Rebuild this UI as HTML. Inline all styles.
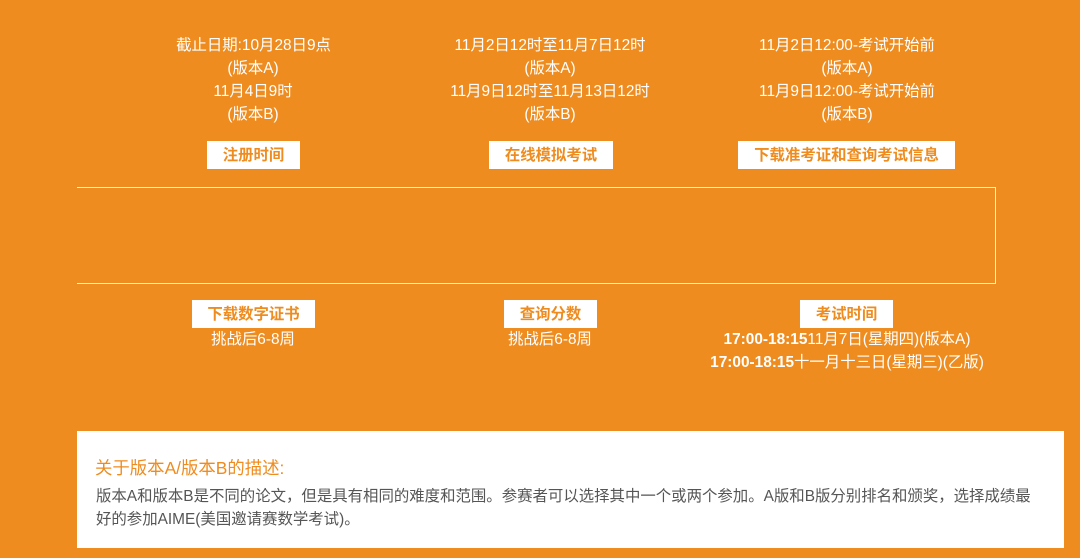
<!DOCTYPE html>
<html lang="zh-CN">
<head>
<meta charset="utf-8">
<title>AIME</title>
<style>
html,body{margin:0;padding:0}
body{width:1080px;height:558px;position:relative;overflow:hidden;background:#ee8c1f;font-family:"Liberation Sans","Noto Sans CJK SC",sans-serif;color:#fff}
.t{position:absolute;white-space:nowrap;transform:translateX(-50%);font-size:15.4px;line-height:23px;height:23px;color:#fff;text-align:center}
.b{position:absolute;background:#fff;color:#ee8c1f;font-size:15.4px;font-weight:700;text-align:center;white-space:nowrap;height:28px;line-height:30px}
.frame{position:absolute;left:77px;top:187px;width:918px;height:95px;border:1px solid #ffeeda;border-left:0;box-sizing:content-box}
.card{position:absolute;left:77px;top:431px;width:987px;height:117px;background:#fff}
.h{position:absolute;left:18px;top:25px;font-size:17.4px;line-height:24px;color:#ee8c1f;white-space:nowrap}
.p{position:absolute;left:19px;white-space:nowrap;font-size:15.42px;line-height:23px;color:#555}
</style>
</head>
<body>
<div class="t" style="left:253.5px;top:34px">截止日期:10月28日9点</div>
<div class="t" style="left:253px;top:57px">(版本A)</div>
<div class="t" style="left:253px;top:80px">11月4日9时</div>
<div class="t" style="left:253px;top:103px">(版本B)</div>

<div class="t" style="left:550px;top:34px">11月2日12时至11月7日12时</div>
<div class="t" style="left:550px;top:57px">(版本A)</div>
<div class="t" style="left:550px;top:80px">11月9日12时至11月13日12时</div>
<div class="t" style="left:550px;top:103px">(版本B)</div>

<div class="t" style="left:847px;top:34px">11月2日12:00-考试开始前</div>
<div class="t" style="left:847px;top:57px">(版本A)</div>
<div class="t" style="left:847px;top:80px">11月9日12:00-考试开始前</div>
<div class="t" style="left:847px;top:103px">(版本B)</div>

<div class="b" style="left:207px;top:141px;width:93px">注册时间</div>
<div class="b" style="left:489px;top:141px;width:124px">在线模拟考试</div>
<div class="b" style="left:738px;top:141px;width:217px">下载准考证和查询考试信息</div>

<div class="frame"></div>

<div class="b" style="left:192px;top:300px;width:123px">下载数字证书</div>
<div class="b" style="left:504px;top:300px;width:93px">查询分数</div>
<div class="b" style="left:800px;top:300px;width:93px">考试时间</div>

<div class="t" style="left:253px;top:328px">挑战后6-8周</div>
<div class="t" style="left:550px;top:328px">挑战后6-8周</div>
<div class="t" style="left:847px;top:328px"><b>17:00-18:15</b>11月7日(星期四)(版本A)</div>
<div class="t" style="left:847px;top:351px"><b>17:00-18:15</b>十一月十三日(星期三)(乙版)</div>

<div class="card">
<div class="h">关于版本A/版本B的描述:</div>
<div class="p" style="top:54px">版本A和版本B是不同的论文，但是具有相同的难度和范围。参赛者可以选择其中一个或两个参加。A版和B版分别排名和颁奖，选择成绩最</div>
<div class="p" style="top:77px">好的参加AIME(美国邀请赛数学考试)。</div>
</div>
</body>
</html>
